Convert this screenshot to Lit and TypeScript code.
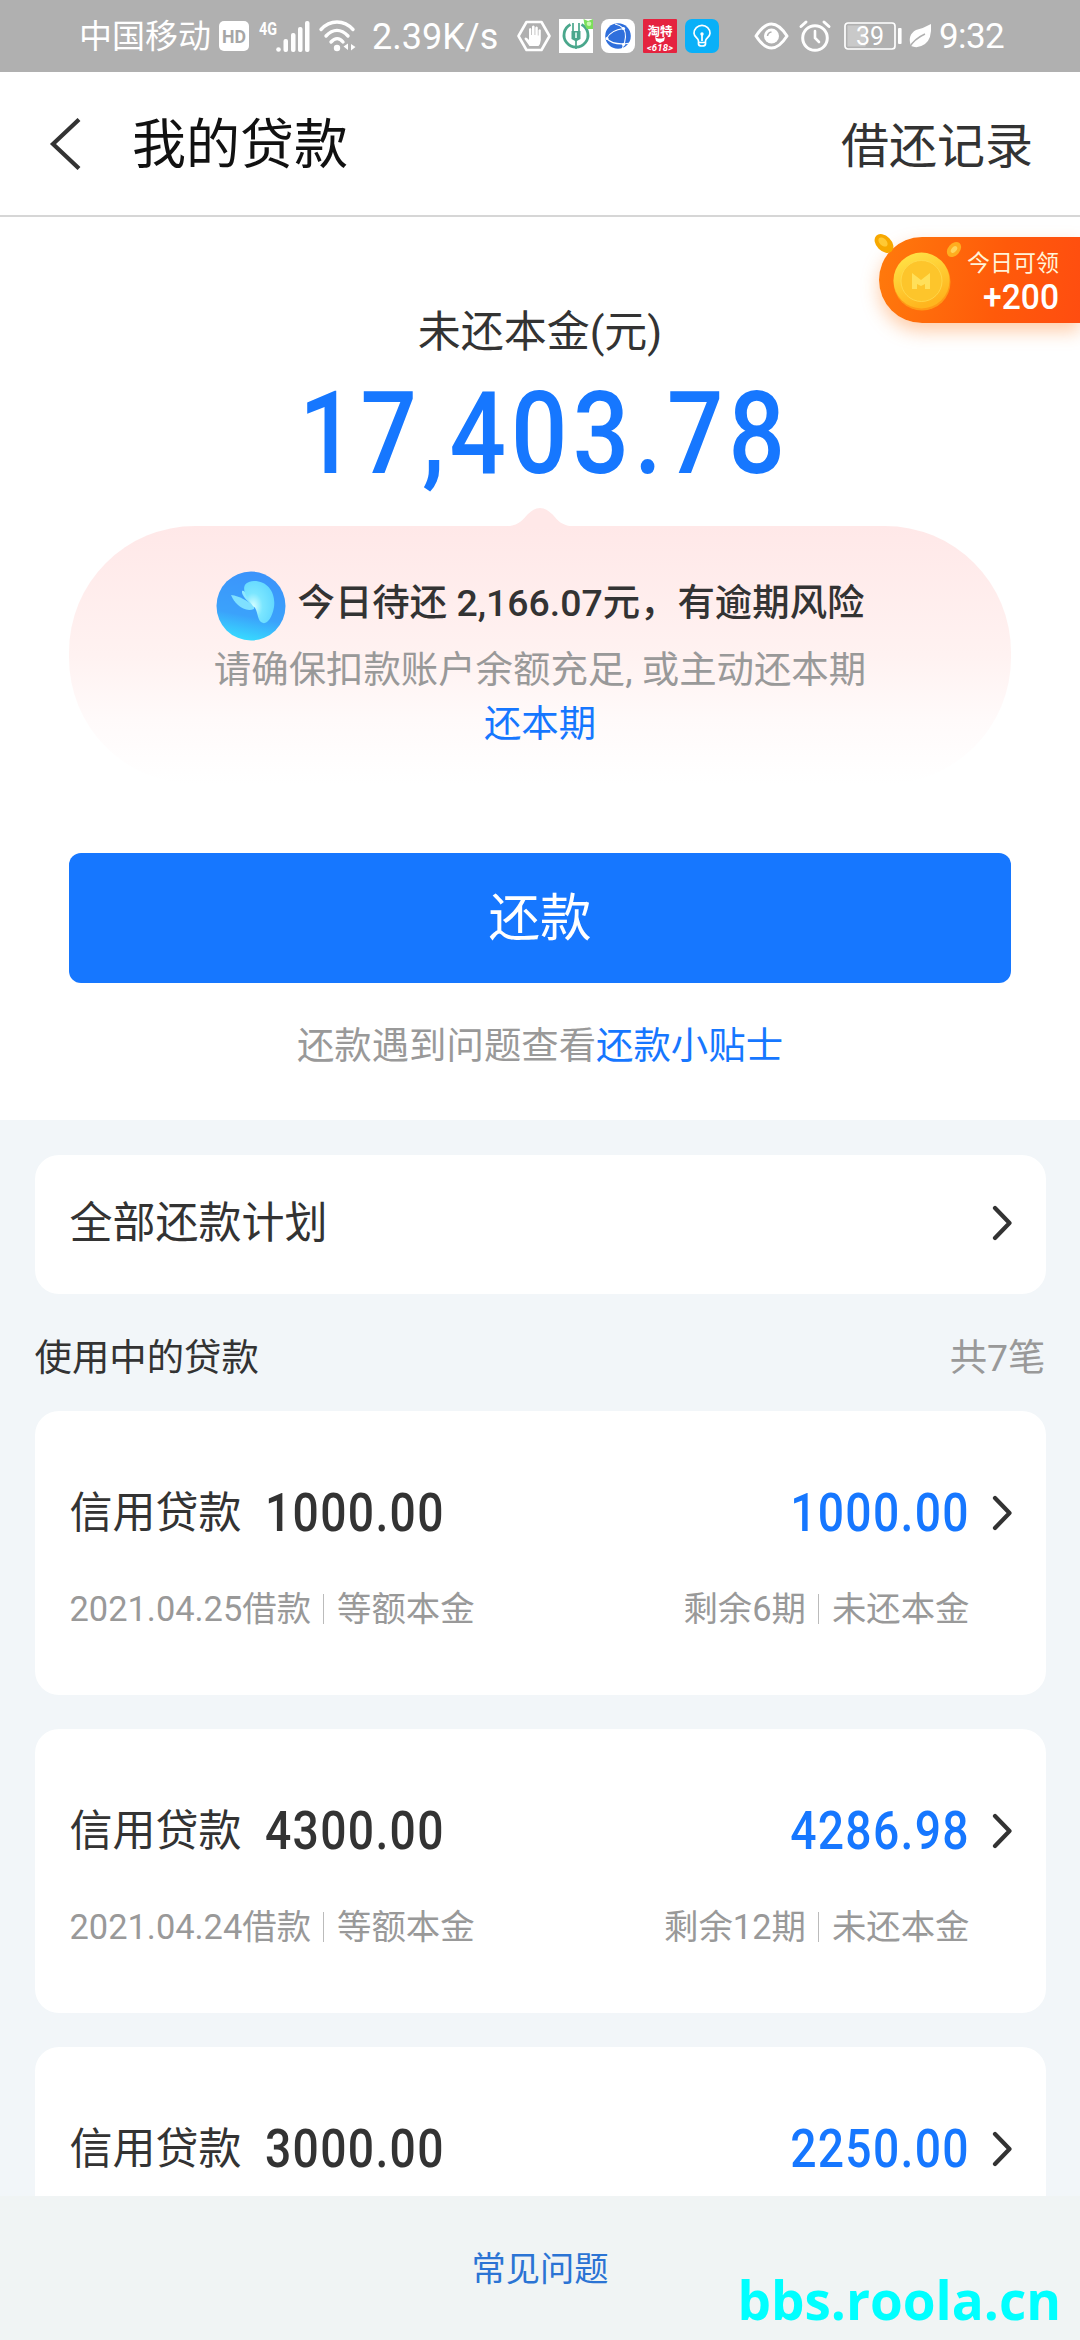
import { LitElement, html, css, nothing } from "lit";
import { customElement, property } from "lit/decorators.js";

interface Loan {
  amount: string;
  rest: string;
  date?: string;
  terms?: number;
}

const LOANS: Loan[] = [
  { amount: "1000.00", rest: "1000.00", date: "2021.04.25", terms: 6 },
  { amount: "4300.00", rest: "4286.98", date: "2021.04.24", terms: 12 },
  { amount: "3000.00", rest: "2250.00" },
];

const chevron = html`<svg width="21" height="36" viewBox="0 0 21 36" fill="none" stroke="#333" stroke-width="4.2" stroke-linecap="round" stroke-linejoin="round">
  <path d="M4 3 L18.5 18 L4 33" />
</svg>`;

@customElement("status-bar")
export class StatusBar extends LitElement {
  static styles = css`
    :host {
      display: flex;
      align-items: center;
      box-sizing: border-box;
      height: 72px;
      padding-left: 79px;
      background: #b0b0b0;
      color: #fff;
      font-size: 36px;
      line-height: 72px;
    }
    svg { display: block; flex: none; overflow: visible; }
    .carrier { font-size: 33px; width: 139px; padding-top: 2px; margin-right: 1px; }
    .net { margin-left: 9px; }
    .wifi { margin-left: 7px; }
    .speed { margin-left: 15px; width: 145px; padding-top: 2px; white-space: nowrap; }
    .app { margin-left: 8px; }
    .eye { margin-left: 35px; }
    .alarm { margin-left: 10px; }
    .battery { margin-left: 13px; }
    .leaf { margin-left: 6px; }
    .time { margin-left: 7px; padding-top: 2px; font-size: 35px; letter-spacing: -0.6px; }
    .label { font-family: "Roboto", sans-serif; }
    .cjk { font-family: "Noto Sans CJK SC", sans-serif; }
  `;

  render() {
    return html`
      <span class="carrier">中国移动</span>
      <svg width="30" height="30" viewBox="0 0 30 30">
        <rect width="30" height="30" rx="5" fill="#fff" />
        <text class="label" x="15" y="22" text-anchor="middle" font-size="19" font-weight="700" textLength="24" lengthAdjust="spacingAndGlyphs" fill="#a6a6a6">HD</text>
      </svg>
      <svg class="net" width="54" height="32" viewBox="0 0 54 32" fill="#fff">
        <text class="label" x="1" y="15" font-size="19" font-weight="700" textLength="18" lengthAdjust="spacingAndGlyphs">4G</text>
        <circle cx="20.5" cy="29.5" r="2.3" />
        <rect x="25.5" y="19" width="4.5" height="13" rx="2" />
        <rect x="33" y="13" width="4.5" height="19" rx="2" />
        <rect x="40" y="7" width="4.5" height="25" rx="2" />
        <rect x="47" y="1" width="4.5" height="31" rx="2" />
      </svg>
      <svg class="wifi" width="38" height="32" viewBox="0 0 38 32" fill="none" stroke="#fff" stroke-width="3.4" stroke-linecap="round">
        <path d="M2 9.5 C11 -0.5 25 -0.5 34 9.5" />
        <path d="M7 16 C14 8.5 22 8.5 29 16" />
        <path d="M12 22 C16 17.5 20.5 17.5 24 22" />
        <circle cx="18" cy="28" r="3.2" fill="#fff" stroke="none" />
        <path d="M29 23.5 V30 L24.5 26.5 Z M32 30.5 V24 L36.5 27 Z" fill="#fff" stroke="none" />
      </svg>
      <span class="speed">2.39K/s</span>
      <svg width="34" height="32" viewBox="0 0 34 32">
        <path d="M9.5 2 H24.5 L32.5 16 L24.5 30 H9.5 L1.5 16 Z" fill="none" stroke="#fff" stroke-width="2.6" stroke-linejoin="round" />
        <path d="M12.5 26 L7.5 19 Q7.5 16.5 10 18 L12 20 V9 Q13.3 7 14.3 9 V15 L15 15 V6.5 Q16.4 4.5 17.6 6.5 V15 H18.3 V7.5 Q19.7 5.5 20.8 7.5 V15.5 H21.5 V10 Q22.8 8.5 23.8 10 V20 Q23.5 24 21.5 26 Z" fill="#fff" />
      </svg>
      <svg class="app" width="34" height="34" viewBox="0 0 34 34">
        <rect width="34" height="34" fill="#fff" />
        <path d="M11.5 5.5 A12 12 0 1 0 22.5 5.5" fill="none" stroke="#4aa78c" stroke-width="2.8" />
        <path d="M14 4 V12 M20 4 V12 M17 20 V30" stroke="#4aa78c" stroke-width="1.7" />
        <path d="M12.5 12 H21.5 V20 L17 22.5 L12.5 20 Z" fill="#4aa78c" />
        <path d="M16 13.5 H18 V19 H16 Z" fill="#c9ebe0" />
        <path d="M24.5 0 L29 2 L34 0 V10 H28 L25.5 6 Z" fill="#7be05a" />
        <circle cx="30" cy="4.8" r="2.3" fill="#c8f7b0" />
      </svg>
      <svg class="app" width="34" height="34" viewBox="0 0 34 34">
        <rect width="34" height="34" rx="8" fill="#fff" />
        <circle cx="17" cy="17" r="12.8" fill="#2f6fdc" />
        <path d="M14 5 Q19 6 22.5 9.5 Q27 17 21.5 29 M22.5 9.5 Q10 11 5.5 19.5 M5.5 19.5 Q13 27 29 24" fill="none" stroke="#fff" stroke-width="1.1" />
        <circle cx="22.5" cy="9.5" r="1.6" fill="#fff" />
        <circle cx="6" cy="19.5" r="1.5" fill="#fff" />
        <circle cx="22.5" cy="25.5" r="1.6" fill="#fff" />
      </svg>
      <svg class="app" width="34" height="34" viewBox="0 0 34 34">
        <rect width="34" height="34" rx="1" fill="#e5233f" />
        <text class="cjk" x="17" y="17" text-anchor="middle" font-size="12.5" font-weight="700" fill="#fff">淘特</text>
        <path d="M12 18 L15 19.5 H19 L22 18 L21 22 L17 24 L13 22 Z" fill="#fff" />
        <text class="label" x="17" y="31.5" text-anchor="middle" font-size="9.5" font-style="italic" font-weight="700" textLength="26" fill="#fff">&lt;618&gt;</text>
      </svg>
      <svg class="app" width="34" height="34" viewBox="0 0 34 34">
        <rect width="34" height="34" rx="7" fill="#0ab0f8" />
        <path d="M13.5 22 C13.5 19 9 18 9 14.3 A8 8 0 0 1 25 14.3 C25 18 20.5 19 20.5 22 V25 Q20.5 27 17 27 Q13.5 27 13.5 25 Z M13.5 23.5 H20.5 M17 22 V15.5" fill="none" stroke="#fff" stroke-width="1.7" />
        <circle cx="17" cy="15" r="1.7" fill="#fff" />
      </svg>
      <svg class="eye" width="35" height="28" viewBox="0 0 35 28">
        <path d="M2 14 Q17.5 -10 33 14 Q17.5 38 2 14 Z" fill="none" stroke="#fff" stroke-width="3" stroke-linejoin="round" />
        <circle cx="17.5" cy="14" r="7.5" fill="#fff" />
        <path d="M13.5 14 Q14 10.5 17.5 10" fill="none" stroke="#b0b0b0" stroke-width="1.5" />
      </svg>
      <svg class="alarm" width="32" height="32" viewBox="0 0 32 32" fill="none" stroke="#fff" stroke-width="3" stroke-linecap="round">
        <circle cx="16" cy="18" r="12.3" />
        <path d="M2 6.5 L7 2 M30 6.5 L25 2" />
        <path d="M16 11 V18 L20 22" stroke-width="2.6" />
      </svg>
      <svg class="battery" width="58" height="28" viewBox="0 0 58 28">
        <rect x="1" y="1" width="50" height="26" rx="3" fill="none" stroke="#fff" stroke-width="1.7" />
        <rect x="3.5" y="3.5" width="18" height="21" fill="#c9c9c9" />
        <text class="label" x="26" y="22.5" text-anchor="middle" font-size="25" fill="#fff">39</text>
        <rect x="54" y="6" width="3.6" height="16" rx="1" fill="#fff" />
      </svg>
      <svg class="leaf" width="24" height="26" viewBox="0 0 24 26">
        <path d="M23 1 Q24 16 17 21 Q10 26 3 23 Q-1 12 8 7 Q16 5 23 1 Z" fill="#fff" />
        <path d="M1 25 Q6 16 17 11" fill="none" stroke="#b0b0b0" stroke-width="1.5" />
      </svg>
      <span class="time">9:32</span>
    `;
  }
}

@customElement("reward-badge")
export class RewardBadge extends LitElement {
  static styles = css`
    :host {
      display: flex;
      align-items: center;
      box-sizing: border-box;
      width: 201px;
      height: 86px;
      padding-left: 12px;
      border-radius: 43px 0 0 43px;
      background: linear-gradient(100deg, #ff7a0c, #ff5a0a 60%, #ff4d10);
      box-shadow: 0 8px 18px rgba(255, 130, 40, 0.4);
      color: #fff3d8;
    }
    .art { position: absolute; left: -8px; top: -4px; }
    .copy { flex: 1; text-align: right; padding: 6px 21px 0 0; }
    .line { font-size: 23px; line-height: 26px; }
    .value { font-size: 35px; font-weight: 500; line-height: 34px; margin-top: 4px; color: #fff; transform: scaleX(0.96); transform-origin: right; }
  `;

  render() {
    return html`
      <svg class="art" width="100" height="90" viewBox="0 0 100 90">
        <defs>
          <linearGradient id="coin" x1="0" y1="0" x2="0.4" y2="1">
            <stop offset="0" stop-color="#ffe74a" />
            <stop offset="1" stop-color="#ffb51e" />
          </linearGradient>
        </defs>
        <ellipse cx="13" cy="10.5" rx="11" ry="7.5" transform="rotate(45 13 10.5)" fill="#f7a800" />
        <ellipse cx="12" cy="9" rx="5.5" ry="3.5" transform="rotate(45 12 9)" fill="#ffc933" />
        <ellipse cx="83" cy="16.5" rx="8.5" ry="6" transform="rotate(-50 83 16.5)" fill="#ffad1f" />
        <ellipse cx="83" cy="16.5" rx="4" ry="2.5" transform="rotate(-50 83 16.5)" fill="#ffd45a" />
        <circle cx="51" cy="49" r="28.5" fill="#ff9a16" />
        <circle cx="50.5" cy="47.5" r="28" fill="url(#coin)" />
        <circle cx="50.5" cy="48" r="20.5" fill="#fdc52b" stroke="#ffda50" stroke-width="0.8" />
        <path d="M41 56 V40 L50 47 L59 40 V56 H54 V51 L50 53 L46 51 V56 Z" fill="#ffe05a" />
      </svg>
      <div class="copy">
        <div class="line">今日可领</div>
        <div class="value">+200</div>
      </div>
    `;
  }
}

@customElement("due-notice")
export class DueNotice extends LitElement {
  static styles = css`
    :host {
      display: flex;
      flex-direction: column;
      align-items: center;
      position: relative;
      box-sizing: border-box;
      width: 942px;
      height: 258px;
      padding-top: 45px;
      border-radius: 126px;
      background: linear-gradient(#ffe8e8, #fff2f1 50%, #fffafa 75%, #fff);
      font-size: 37.4px;
    }
    .tip { position: absolute; left: 433px; top: -18px; }
    .head { display: flex; align-items: center; gap: 12px; height: 70px; font-weight: 500; color: #333; white-space: nowrap; }
    .headline { line-height: 60px; margin-top: -7px; }
    svg { display: block; }
    .hint { margin-top: 2px; line-height: 54px; color: #999; white-space: nowrap; }
    .link { line-height: 54px; color: #1677ff; }
  `;

  render() {
    return html`
      <svg class="tip" width="76" height="19" viewBox="0 0 76 19">
        <path d="M0 19 C18 18 20 12 26 6 Q38 -6 50 6 C56 12 58 18 76 19 Z" fill="#ffe8e8" />
      </svg>
      <div class="head">
        <svg width="70" height="70" viewBox="0 0 70 70">
          <defs>
            <linearGradient id="orb" x1="0.6" y1="0" x2="0.4" y2="1">
              <stop offset="0" stop-color="#3b93fb" />
              <stop offset="0.65" stop-color="#3ba2fb" />
              <stop offset="1" stop-color="#37dcff" />
            </linearGradient>
            <radialGradient id="wing" cx="0.3" cy="0.6" r="0.7">
              <stop offset="0" stop-color="#d8ffff" />
              <stop offset="0.45" stop-color="#7be6ff" />
              <stop offset="1" stop-color="#62d8ff" />
            </radialGradient>
          </defs>
          <circle cx="35" cy="35" r="34.5" fill="url(#orb)" />
          <path d="M38 38 C28 42 18 32 15 24 C24 25 31 30 38 35 Z" fill="#7fe0ff" />
          <path d="M38 36 C32 31 25 24 26 20 C28 18 34 26 38 34 Z" fill="#8ee8ff" />
          <path d="M37 35 C25 20 25 11 38 10 C52 10 60 22 58 36 C56 48 50 55 45 51 C41 48 42 38 37 35 Z" fill="url(#wing)" />
        </svg>
        <span class="headline">今日待还 2,166.07元，有逾期风险</span>
      </div>
      <div class="hint">请确保扣款账户余额充足, 或主动还本期</div>
      <div class="link">还本期</div>
    `;
  }
}

@customElement("loan-card")
export class LoanCard extends LitElement {
  @property({ attribute: false }) loan!: Loan;

  static styles = css`
    :host {
      display: block;
      box-sizing: border-box;
      height: 284px;
      padding: 70px 34px 0 35px;
      border-radius: 24px;
      background: #fff;
    }
    .top, .sub { display: flex; align-items: center; justify-content: space-between; }
    .top { height: 64px; }
    .side, .meta { display: flex; align-items: center; }
    .name { font-size: 43px; line-height: 64px; color: #333; }
    .num { font-size: 53px; font-weight: 500; line-height: 64px; letter-spacing: 1.5px; color: #333; transform: scaleX(0.873); }
    .from { transform-origin: left; margin-left: 23.5px; }
    .rest { color: #1677ff; transform-origin: right; }
    svg { display: block; margin-left: 20.5px; }
    .sub { margin-top: 39px; height: 50px; padding-right: 42px; font-size: 34.4px; line-height: 50px; color: #999; }
    .bar { width: 1px; height: 30px; margin: 0 13px 0 12px; background: #bbb; }
  `;

  render() {
    const { amount, rest, date, terms } = this.loan;
    return html`
      <div class="top">
        <div class="side"><span class="name">信用贷款</span><span class="num from">${amount}</span></div>
        <div class="side"><span class="num rest">${rest}</span>${chevron}</div>
      </div>
      ${date
        ? html`<div class="sub">
            <div class="meta"><span>${date}借款</span><i class="bar"></i><span>等额本金</span></div>
            <div class="meta"><span>剩余${terms}期</span><i class="bar"></i><span>未还本金</span></div>
          </div>`
        : nothing}
    `;
  }
}

@customElement("app-root")
export class AppRoot extends LitElement {
  static styles = css`
    :host {
      display: flex;
      flex-direction: column;
      position: relative;
      width: 1080px;
      height: 2340px;
      overflow: hidden;
      background: #f2f6f9;
      font-family: "Roboto", "Noto Sans CJK SC", sans-serif;
      color: #333;
    }
    svg { display: block; }
    status-bar, .nav, .summary, .footer { flex: none; }
    .nav { display: flex; align-items: center; box-sizing: border-box; height: 145px; padding: 0 47px 0 49px; border-bottom: 2px solid #d6d6d6; background: #fff; }
    .title { margin-left: 51px; padding-top: 4px; font-size: 54px; line-height: 80px; color: #111; }
    .records { margin-left: auto; font-size: 48px; line-height: 80px; padding-top: 6px; }
    .summary { display: flex; flex-direction: column; align-items: center; box-sizing: border-box; height: 903px; padding-top: 85px; background: #fff; }
    reward-badge { position: absolute; right: 0; top: 237px; }
    .caption { font-size: 43px; line-height: 60px; }
    .total { height: 134px; margin: 5px 0 0 10px; line-height: 134px; font-size: 115px; font-weight: 500; letter-spacing: 6px; color: #1677ff; transform: scaleX(0.863); }
    due-notice { margin-top: 25px; }
    .pay { display: block; box-sizing: border-box; width: 942px; height: 130px; margin-top: 69px; padding: 1px 0 0; border: 0; border-radius: 12px; background: #1677ff; color: #fff; font: inherit; font-size: 51.5px; line-height: 70px; }
    .help { margin-top: 35px; font-size: 37.4px; line-height: 56px; color: #999; }
    .link { color: #1677ff; }
    .list { flex: 1; min-height: 0; overflow: hidden; padding: 35px 34.5px 0; }
    .plan { display: flex; align-items: center; justify-content: space-between; box-sizing: border-box; height: 139px; padding: 0 34px 4px 35px; border-radius: 24px; background: #fff; font-size: 43px; line-height: 60px; }
    .section { display: flex; align-items: center; justify-content: space-between; box-sizing: border-box; height: 117px; padding-top: 10px; font-size: 37.4px; line-height: 60px; }
    .section .count { color: #999; }
    .cards { display: flex; flex-direction: column; gap: 34px; }
    .footer { display: flex; justify-content: center; height: 144px; background: #f0f4f4; font-size: 34.3px; line-height: 146px; color: #2b74d4; }
    .mark { position: absolute; right: 19px; bottom: 10px; font-family: "Open Sans", "Noto Sans", sans-serif; font-size: 53px; font-weight: 700; line-height: 60px; color: #00ffff; }
  `;

  render() {
    return html`
      <status-bar></status-bar>
      <header class="nav">
        <svg width="32" height="52" viewBox="0 0 32 52" fill="none" stroke="#333" stroke-width="4.2"><path d="M30 1.5 L4 26 L30 50.5" /></svg>
        <span class="title">我的贷款</span>
        <span class="records">借还记录</span>
      </header>
      <section class="summary">
        <div class="caption">未还本金(元)</div>
        <div class="total">17,403.78</div>
        <due-notice></due-notice>
        <button class="pay">还款</button>
        <div class="help">还款遇到问题查看<span class="link">还款小贴士</span></div>
      </section>
      <main class="list">
        <div class="plan"><span>全部还款计划</span>${chevron}</div>
        <div class="section"><span>使用中的贷款</span><span class="count">共7笔</span></div>
        <div class="cards">${LOANS.map((l) => html`<loan-card .loan=${l}></loan-card>`)}</div>
      </main>
      <footer class="footer">常见问题</footer>
      <reward-badge></reward-badge>
      <div class="mark">bbs.roola.cn</div>
    `;
  }
}
